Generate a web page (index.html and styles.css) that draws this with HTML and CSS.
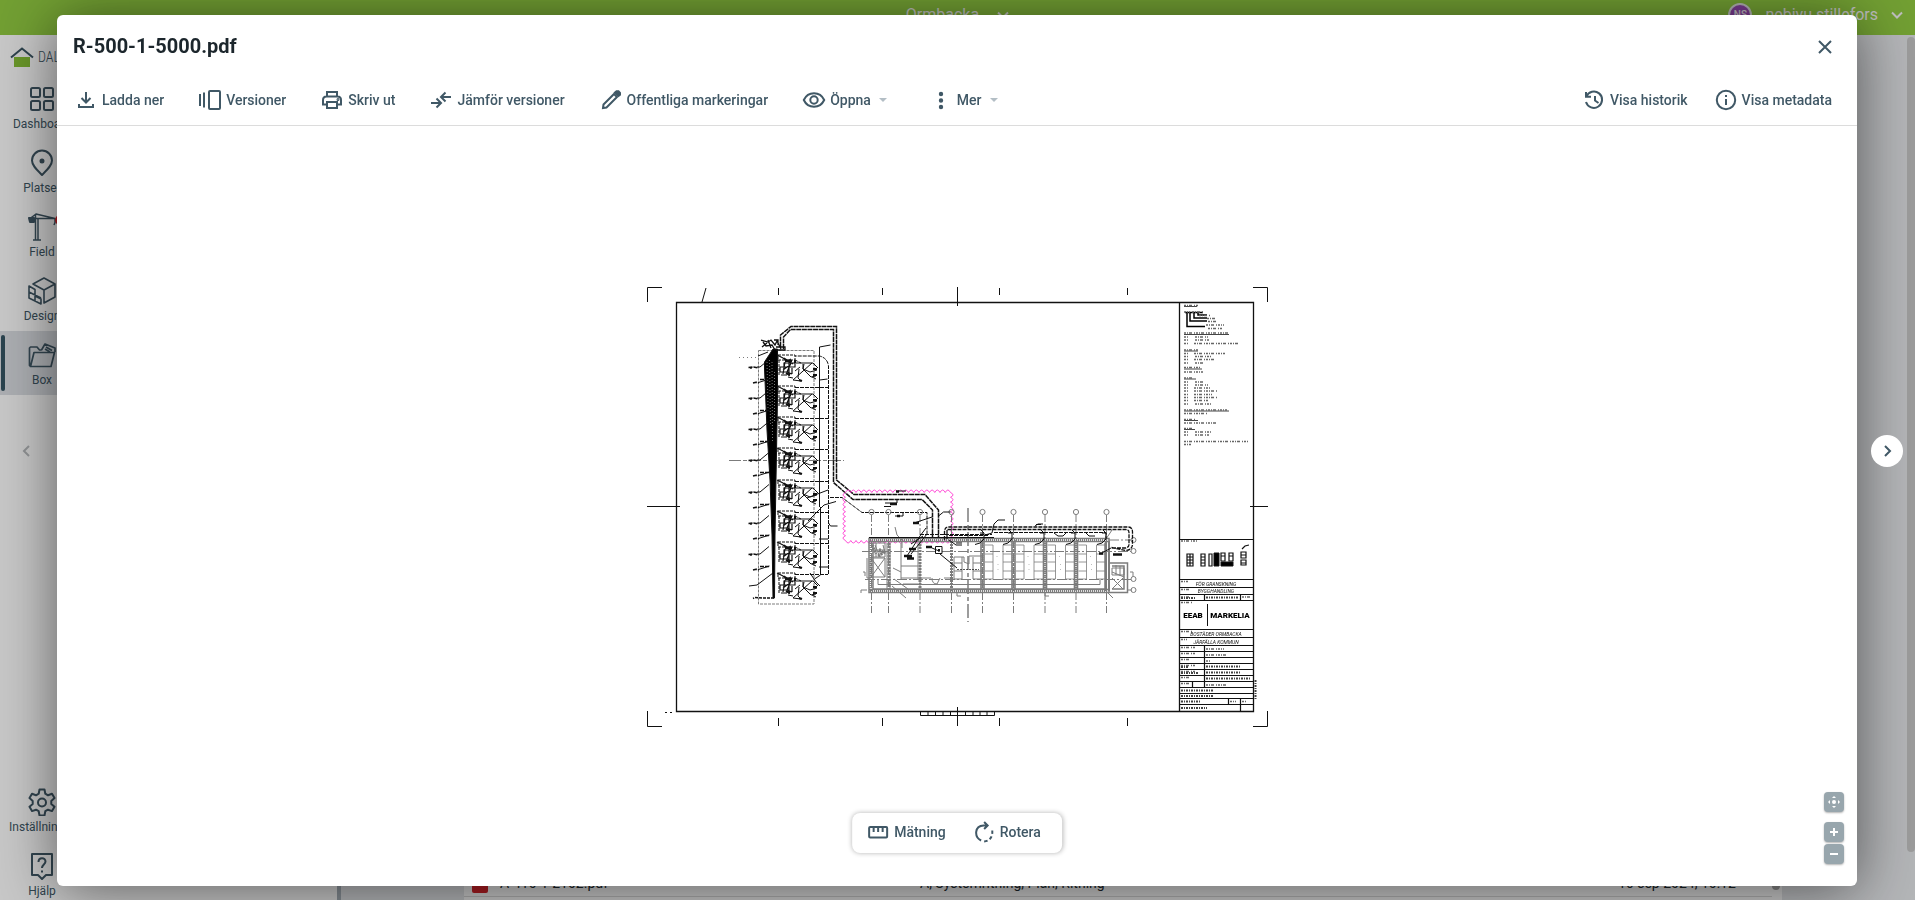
FILE: index.html
```html
<!DOCTYPE html>
<html lang="sv">
<head>
<meta charset="utf-8">
<title>R-500-1-5000.pdf</title>
<link rel="stylesheet" href="styles.css">
</head>
<body>
<div class="app">
  <header class="topbar">
    <button class="topbar-button project" type="button">Ormbacka
      <svg class="chevron" viewBox="0 0 12 12"><path d="M1 3.500l5 5 5-5"/></svg>
    </button>
    <button class="topbar-button account" type="button">
      <span class="avatar">NS</span>
      <span class="account-name">nebiyu stillefors</span>
      <svg class="chevron" viewBox="0 0 12 12"><path d="M1 3.500l5 5 5-5"/></svg>
    </button>
  </header>
  <div class="workspace">
    <nav class="sidebar">
      <a class="logo" href="#">
        <svg class="logo-house" viewBox="0 0 24 20"><path d="M4 10h16v10H4z" fill="#86c035"/><path d="M1 10.500L12 1.500l11 9" fill="none" stroke="#3a5563" stroke-width="2"/></svg>
        <span>DALUX</span>
      </a>
      <a class="nav-item" href="#">
        <svg viewBox="0 0 28 28"><rect x="3" y="3" width="9" height="9" rx="1.500"/><rect x="16" y="3" width="9" height="9" rx="1.500"/><rect x="3" y="16" width="9" height="9" rx="1.500"/><rect x="16" y="16" width="9" height="9" rx="1.500"/></svg>
        <span>Dashboard</span>
      </a>
      <a class="nav-item" href="#">
        <svg viewBox="0 0 28 28"><path d="M14 26C9 21 4 16.500 4 11.500a10 10 0 0 1 20 0C24 16.500 19 21 14 26z"/><circle cx="14" cy="12" r="1.500" fill="currentColor"/></svg>
        <span>Platser</span>
      </a>
      <a class="nav-item" href="#">
        <svg viewBox="0 0 28 28"><path d="M2 5.500L8 1l19 4.500M2 5.500h25v4l-1 2.500M7.500 1.500v25M10 5.500v21M5 27h8" stroke-width="1.500"/><path d="M1 5h5v4H2z" fill="currentColor"/></svg>
        <span class="badge"></span>
        <span>Field</span>
      </a>
      <a class="nav-item" href="#">
        <svg viewBox="0 0 28 28"><path d="M5 7l11-6 11 6-11 6zM27 7v13l-11 6V13M1 9l6 3.500V19l6 3v5L1 21zM1 15l12 6M7 18v6" stroke-width="1.600"/></svg>
        <span>Design</span>
      </a>
      <a class="nav-item selected" href="#">
        <svg viewBox="0 0 28 28"><path d="M2.500 25.500l-1-1V7l1-1H9l2.500 3h2M2.500 25.500L6 11.500h20.500L23 25.500zM13.500 9l3.500-6L27 7v4M17 8l5 3M18 6l6 3.500" stroke-width="1.700"/></svg>
        <span>Box</span>
      </a>
      <div class="nav-bottom">
        <a class="nav-item" href="#">
          <svg viewBox="0 0 28 28"><path d="M11.500 1.500h5l.8 4.200 2.700 1.600 4-1.500 2.500 4.300-3.200 2.800v3.200l3.200 2.700-2.500 4.300-4-1.400-2.700 1.500-.8 4.300h-5l-.8-4.300L8 21.700l-4 1.400-2.500-4.300 3.200-2.700v-3.200L1.500 10.100 4 5.800l4 1.500 2.700-1.600z"/><circle cx="14" cy="14.500" r="4"/></svg>
          <span>Inställningar</span>
        </a>
        <a class="nav-item" href="#">
          <svg viewBox="0 0 28 28"><path d="M4 2h20v21h-6l-4 4-4-4H4z"/><path d="M10.500 10c0-5 7-5 7-.5 0 3-3.500 3-3.500 6.500M14 18.500v2"/></svg>
          <span>Hjälp</span>
        </a>
      </div>
    </nav>
    <section class="folders"></section>
    <main class="content">
      <div class="file-card">
        <div class="file-row">
          <span class="pdf-icon">PDF</span>
          <span class="file-name">A-410-1-2102.pdf</span>
          <span class="file-tags">A, Systemritning, Plan, Ritning</span>
          <span class="file-date">16 sep 2024, 10:12</span>
        </div>
        <div class="card-scroll"></div>
      </div>
    </main>
    <div class="page-scroll"></div>
  </div>
</div>

<div class="overlay">
  <button class="pager pager-previous" type="button" aria-label="Föregående" disabled>
    <svg viewBox="0 0 12 12"><path d="M8 1L3 6l5 5"/></svg>
  </button>
  <div class="dialog" role="dialog" aria-labelledby="dialog-title">
    <div class="dialog-head">
      <h1 id="dialog-title">R-500-1-5000.pdf</h1>
      <button class="close" type="button" aria-label="Stäng"><svg viewBox="0 0 14 14"><path d="M1 1l12 12M13 1L1 13"/></svg></button>
    </div>
    <div class="toolbar">
      <div class="tools">
        <button class="tool" type="button"><svg viewBox="0 0 24 24"><path d="M12 4v10M7.500 10l4.500 4.500 4.500-4.500M5 16v3h14v-3"/></svg>Ladda ner</button>
        <button class="tool" type="button"><svg viewBox="0 0 24 24"><path d="M2 6v12M6 4.500v15"/><rect x="11" y="3" width="11" height="18" rx="1"/></svg>Versioner</button>
        <button class="tool" type="button"><svg viewBox="0 0 24 24"><path d="M7 8V4h10v4M7 16.500H3V12q0-3.500 3.500-3.500h11Q21 8.500 21 12v4.500h-4M7 14h10v6H7z"/><circle cx="18" cy="11.500" r=".5" class="solid"/></svg>Skriv ut</button>
        <button class="tool" type="button"><svg viewBox="0 0 24 24"><path d="M2 15h9M7.500 10.500L12 15l-4.500 4.500M22 9h-9M16.500 4.500L12 9l4.500 4.500"/></svg>Jämför versioner</button>
        <button class="tool" type="button"><svg viewBox="0 0 24 24"><path d="M4 20l.5-3.500L15 6l3 3L7.500 19.500z"/><path class="solid" d="M16 4.500l1.500-1.200h2l1.500 1.500v2L19.500 8z"/></svg>Offentliga markeringar</button>
        <button class="tool" type="button"><svg viewBox="0 0 24 24"><path d="M1.800 12C6 3 18 3 22.200 12 18 21 6 21 1.800 12z"/><circle cx="12" cy="12" r="3.700"/></svg>Öppna<span class="caret"></span></button>
        <button class="tool" type="button"><svg viewBox="0 0 24 24"><g class="solid"><circle cx="12" cy="6" r="1.200"/><circle cx="12" cy="12.500" r="1.200"/><circle cx="12" cy="19" r="1.200"/></g></svg>Mer<span class="caret"></span></button>
      </div>
      <div class="tools tools-end">
        <button class="tool" type="button"><svg viewBox="0 0 24 24"><path d="M4.300 8.500A8.200 8.200 0 1 1 4 14M4 4v4.800h5M13 8v4.500l3.500 2.500"/></svg>Visa historik</button>
        <button class="tool" type="button"><svg viewBox="0 0 24 24"><circle cx="12" cy="12" r="9.200"/><path d="M12 11v6M12 7v2"/></svg>Visa metadata</button>
      </div>
    </div>
    <div class="viewer">
      <svg class="drawing" width="622" height="444" viewBox="646 284 622 444" role="img" aria-label="Ritning R-500-1-5000">
        <defs>
          <g id="unit">
            <path d="M778 0H795V5H778zM779 5V21M795 5l6 3" stroke-dasharray="3 1"/>
            <path d="M777 0l6 3 4 3 4-2M784 3l9 6M784 8h11v4h-11zM780 12h9v5h-9zM789 5v16M785 7l-2 12M791 8l-4 9 5 2M783 15l8-6M781 20h6M792 13v6" stroke-width="1.200"/>
            <path d="M796 8h17l5 5M812 8l-19 17 8 1M799 14l-1 9 3 3M803 9v5l8 8 5-1M804 9l-1 5 7 3 7-2M812 22l4 2M795 16l5-4M788 22l5 1" />
            <path d="M795 5v3M786 18l4 2M799 25l3 1M813 14h4M813 20h4M785 6h7" stroke-width="2"/>
          </g>
          <g id="leader">
            <path d="M757 11h3l9-7.500M758.500 26.500l11-3.500"/>
            <path d="M748.500 11.500l5-.5 5 1M753 27l3-.8 3 .5M760 23.500h10M751 11v2" stroke-width="1.600" stroke-dasharray="4 1"/>
          </g>
          <g id="bay">
            <path d="M0 540v50M3 540v50" stroke-width="1.600"/>
            <path d="M1.500 541v49" stroke-width="2" stroke-dasharray="1 1"/>
            <path d="M4 545h8v34H4M4 554h8M4 562h8M4 571h8M31 545h-9v34h9M22 554h9M22 562h9M22 571h9" stroke-width=".8"/>
            <path d="M16 551v6M17 564v6" stroke-width=".5" stroke-dasharray="1 4"/>
          </g>
          <g id="axis"><circle cx="0" cy="512" r="2.600"/><path d="M0 515v100" stroke-dasharray="7 2 2 2"/></g>
          <path id="branch" d="M0 530l3 3v6l-4 4-5 1.500M-1 533h4" />
        </defs>
        <g class="ink">
          <path d="M647.500 302V287.500H662M1253 287.500h14.500V302M647.500 711v15.500H662M1253 726.500h14.500V711M706 288l-4 14M778.500 288v7M882.500 288v7M999.500 288v7M1127.500 288v7M778.500 718v8M882.500 718v8M999.500 718v8M1127.500 718v8M957.500 287v19M957.500 707v19M647 506.500h33M1250 506.500h18M665 712.500h2M670 712.500h2"/>
          <path d="M676.500 302.500h577v409h-577zM1179.500 302.500v409" stroke-width="1.300"/>
          <path d="M920.500 712v3.500h74V712M928 712v3M935.500 712v3M943 712v3M950.500 712v3M965.500 712v3M973 712v3M980 712v3M987 712v3"/>
        </g>
        <g class="grey">
          <path d="M758.500 350.500h55.500v253.500h-55.500z" stroke-dasharray="3 1"/>
          <path d="M729 460.500h115" stroke-dasharray="12 2 4 2"/>
          <path d="M739 357.500h17" stroke-dasharray="1 3"/>
        </g>
        <g class="ink">
          <path class="filled" d="M773 349h4.500v50l-1.500 80-1 56-.5 63h-1.500l-1-63-2-55-3-50-2.500-62v-6z"/>
          <path class="hatch" d="M767 362l1 46M769.500 360l1 66M772 362l.5 80M774.500 372v50"/>
          <path d="M761 340l7 2 3-2 4 5 2-4 4 8M763 342l3 4 6-1 3 5M768 340l3 8M776 347h9v3h-9M762 347l5-4M774 340h4v5" stroke-width="1.300"/>
          <path d="M758 356l10-4"/>
          <path d="M774 598h-12l-7-.5-2 1" stroke-dasharray="3 1" stroke-width="1.500"/>
          <use href="#unit" y="355"/><use href="#unit" y="386"/><use href="#unit" y="417"/><use href="#unit" y="448"/><use href="#unit" y="480"/><use href="#unit" y="511"/><use href="#unit" y="542"/><use href="#unit" y="573"/>
          <use href="#leader" y="356"/><use href="#leader" y="387"/><use href="#leader" y="418"/><use href="#leader" y="449"/><use href="#leader" y="481"/><use href="#leader" y="512"/><use href="#leader" y="543"/>
          <path d="M749 586l8-1 16-12" />
          <path d="M795 387.500h33M795 418.500h33M795 449.500h33M795 481.500h33M795 512.500h33M795 543.500h33M795 574.500h33M828.500 574V366q-1-8-9-10H795" stroke-dasharray="4 1"/>
          <path d="M819.500 347v160M819.500 347l11-2M820.500 507v68l-6 4M819.500 380l8-1M808 521l16-16 12-3.500M828.500 523l2 3h7M828 490l-21 8M819 539h9M819 567h10M810 573l6 9 4 4"/>
          <path d="M780.500 347v-12l10.500-8.500h45.500V480L854 494.500h71l13.500 15.500v27M783.500 349v-12l7-7.500h43V482.500L853 499.500h69l10.500 10.500v27" stroke-width="1.500" stroke-dasharray="5 .6"/>
          <path d="M830 497.500h12l20 15h65v22" stroke-dasharray="4 1"/>
        </g>
        <path class="cloud" d="M845.500 492.500q2.600-5 5.250 0 2.600-5 5.250 0 2.600-5 5.250 0 2.600-5 5.250 0 2.600-5 5.250 0 2.600-5 5.250 0 2.600-5 5.250 0 2.600-5 5.250 0 2.600-5 5.250 0 2.600-5 5.250 0 2.600-5 5.250 0 2.600-5 5.250 0 2.600-5 5.250 0 2.600-5 5.250 0 2.600-5 5.250 0 2.600-5 5.250 0 2.600-5 5.250 0 2.600-5 5.250 0 2.600-5 5.250 0 2.600-5 5.250 0q5 2.400 0 4.800 5 2.400 0 4.800 5 2.400 0 4.800 5 2.400 0 4.800 5 2.400 0 4.800 5 2.400 0 4.800 5 2.400 0 4.800 5 2.400 0 4.800 5 2.400 0 4.800 5 2.400 0 4.800q-2.600 5-5.250 0-2.600 5-5.250 0-2.600 5-5.250 0-2.600 5-5.250 0-2.600 5-5.250 0-2.600 5-5.250 0-2.600 5-5.250 0-2.600 5-5.250 0-2.600 5-5.250 0-2.600 5-5.250 0-2.600 5-5.250 0-2.600 5-5.250 0-2.600 5-5.250 0-2.600 5-5.250 0-2.600 5-5.250 0-2.600 5-5.250 0-2.600 5-5.250 0-2.600 5-5.250 0-2.600 5-5.250 0-2.600 5-5.250 0q-5-2.400 0-4.800-5-2.400 0-4.800-5-2.400 0-4.800-5-2.400 0-4.800-5-2.400 0-4.800-5-2.400 0-4.800-5-2.400 0-4.800-5-2.400 0-4.800-5-2.400 0-4.800-5-2.400 0-4.800"/>
        <g class="grey">
          <use href="#axis" x="871.500"/><use href="#axis" x="888.500"/><use href="#axis" x="920"/><use href="#axis" x="951.500"/><use href="#axis" x="982.500"/><use href="#axis" x="1013.500"/><use href="#axis" x="1045"/><use href="#axis" x="1076"/><use href="#axis" x="1106.500"/>
          <circle cx="1133.500" cy="540" r="2.500"/><circle cx="1133.500" cy="551" r="2.500"/><circle cx="1133.500" cy="579" r="2.500"/><circle cx="1133.500" cy="590" r="2.500"/>
          <path d="M968 508v114" stroke-dasharray="14 3 4 3" stroke-width="1.500"/>
          <path d="M862 551.500h269M865 579.500h266M1109 540h22M1128 590h4" stroke-dasharray="10 2 2 2"/>
          <path d="M869 538.500h240v54H869zM873 543v46h232v-46M869 589.500h240M869 541.500h240M1109 563h18.500v29.500H1109M1112 566h12v23h-12" stroke-width="1.500"/>
          <path d="M870 591.500h238M870 540h238M871 543v47" stroke-dasharray="1 1" stroke-width="3"/>
          <path d="M878 580v4.500h222v-5M901 543v36M901 566h17M918 543v36M901 578h30M944 578h7M893 568l8 4M894 579l14 10M903 584h15M892 586l14 12M932 578q0 6 5 6l3-6M954 557h10v5l5 2v-8h13M954 557v22h8v-22M973 557v22h9M954 563h8M954 571h8M973 563h9M973 571h9M895 527l2 8 5 5v8M1112 530l-6 9"/>
          <path d="M871 543h14v14h-14M876 543v14M871 550h14M871 558h14v19h-14zM871 558l14 19M885 558l-14 19M887 543v47M890 543v47M867 558v20h4M875 545l4 10M880 548v9M883 545l2 8"/>
          <path d="M872 545l4 9M879 550l6 3M878 556l7-4M889 543v47M920 541v49M951.500 541v49" stroke-width="3" stroke-dasharray="2 1"/>
          <path d="M1112 568h12v7h-12zM1116 565v10M1120 566v10M1112 572l12 5M1112 578l11 11M1123 578l-11 11M1108 593l5 5M865 576v-4h-2M861 593v-3h6M957 593v3h4M1045 593v3h4M1133 572v5M1130 572h3"/>
          <use href="#bay" x="981"/><use href="#bay" x="1012"/><use href="#bay" x="1043.500"/><use href="#bay" x="1074.500"/>
          <path d="M1106 541v50M1109 541v50" stroke-width="2"/>
        </g>
        <g class="ink">
          <path d="M869 537.500h125"/>
          <path d="M944.500 540v-8q0-5 4-5H1128q4.500 0 4.500 5v12q0 6-7 6.500l-14-3M947 539v-9.500h179q3 0 3 3v12q0 3-4 3.500h-13" stroke-width="1.300" stroke-dasharray="4 1"/>
          <path d="M920 534.500h72M994 532.500h112v6M988 535.500h-40" stroke-dasharray="4 1"/>
          <path d="M985 535l7-2 2-9 4-4h7M1035 526l3-2h5M938.500 516l5-4h7M914 523l18-6M898 491h8M885 503h12v-3M895 516h8v-3"/>
          <use href="#branch" x="981"/><use href="#branch" x="1009"/><use href="#branch" x="1041"/><use href="#branch" x="1072"/><use href="#branch" x="1103"/>
          <path d="M1054 533l4 3h5l3-3M1086 533l3 3h6M949 540l7 5h6"/>
          <path d="M926 528l-6 8-13 20M923 536l-12 8M927 534l-16 20"/>
          <path d="M890 504h7M913 523h6M909 549h7M904 556h8M907 558.500h7M926 547h6M1113 554.500h9M1099 553.500h4M896 491.500h3M897 516h3" stroke-width="2.500"/>
          <path d="M935.500 546.500h6.500v7h-6.500zM932 548l7 3M1102 553l9-5M1036 524.500h5"/>
          <path d="M938 550h2" stroke-width="2"/>
          <path d="M940 554l17 14" />
          <path d="M957 569.500h22" stroke-dasharray="2 1" stroke-width=".7"/>
          <path d="M884 506.500h7M956 543h6" />
        </g>
        <g class="legend">
          <path d="M1184 306.500h13M1184 334.500h45M1184 351h14M1184 369h18M1184 379h12M1184 411h45M1184 420.500h14M1184 429.500h11"/>
          <path class="tree" d="M1185 312.500h18M1187 313v13.500h18M1190 313v8h17M1194 313v5h13M1198 313v2h9"/>
          <path class="scribble" d="M1184 305.500h14M1184 312h6M1192 312h12M1199 315.500h11M1207 318.500h9M1208 321.500h9M1206 325h18M1208 328.500h14M1184 333h44M1184 337h4M1195 337h13M1184 340h5M1195 340h14M1184 343.500h4M1194 343.500h44M1184 350h14M1184 353.500h4M1194 353.500h31M1184 356.500h4M1195 356.500h16M1184 359.500h4M1194 359.500h22M1184 363h4M1195 363h8M1184 367.500h17M1184 372h19M1184 378h10M1184 382h4M1195 382h9M1184 385h4M1195 385h13M1184 388h4M1194 388h16M1184 391h5M1194 391h23M1184 394.500h5M1194 394.500h18M1184 397.500h4M1194 397.500h23M1184 400.500h4M1194 400.500h15M1184 404h4M1195 404h16M1184 410h43M1184 413.500h24M1184 419.500h12M1184 423h33M1184 428.500h10M1184 432h4M1195 432h17M1184 435h4M1195 435h14M1184 441.500h64M1184 444.500h7"/>
        </g>
        <g class="ink">
          <path d="M1180 539.500h73M1180 579.500h73M1180 587.500h73M1180 594.500h73M1180 600.500h73M1180 629.500h73M1180 637.500h73M1180 645.500h73M1180 651.500h73M1180 657.500h73M1180 663.500h73M1180 669.500h73M1180 675.500h73M1180 681.500h73M1180 687.500h73M1180 693.500h73M1180 698.500h73M1180 704.500h73M1204.500 594v6M1240.500 594v6M1204.500 645v42M1192.500 681v6M1228.500 698v6M1240.500 698v13" stroke-width="1.200"/>
          <path d="M1187 554h6v12h-6zM1187 557h6M1187 560h6M1187 563h6M1190 554v12M1201 554h4v12h-4zM1201 557h4M1201 560h4M1201 563h4M1209 554h3v12h-3zM1221 553h4v8h-4zM1229 553h4v8h-4zM1221 556h4M1229 556h4M1241 552h5v6h-5zM1241 560h5v5h-5zM1241 555h5M1241 563h5M1242 549l3-3 4-1" stroke-width="1.200"/>
          <path class="filled" d="M1214 553h5v13h-5zM1221 562h12v4h-12z"/>
          <path d="M1207.500 604v22"/>
        </g>
        <g class="legend">
          <path class="scribble" d="M1181 541h16M1181 581.500h7M1181 589.500h8M1181 602.500h12M1181 631.500h12M1181 639.500h6M1181 647.500h14M1206 649h18M1181 653.500h14M1206 655h22M1181 659.500h8M1206 661h5M1181 665.500h14M1181 671.500h14M1181 677.500h10M1181 683.500h8M1206 685h20M1230 701.500h6M1242 701.500h5M1181 597h8M1242 597h9"/>
          <path class="scribble heavy" d="M1181 598h15M1206 597.500h33M1181 667h8M1206 666.500h35M1181 673h18M1206 672.500h35M1206 678.500h44M1181 690.500h33M1181 696h32M1181 701.500h20M1181 708h26M1255.500 680v20"/>
        </g>
        <g class="sheet-text">
          <text x="1216" y="586">FÖR GRANSKNING</text>
          <text x="1216" y="593">BYGGHANDLING</text>
          <text x="1216" y="636">BOSTÄDER ORMBACKA</text>
          <text x="1216" y="644">JÄRFÄLLA KOMMUN</text>
          <text class="firm" x="1193" y="618">EEAB</text>
          <text class="firm" x="1230" y="618">MARKELIA</text>
        </g>
      </svg>
      <div class="measure-bar">
        <button class="tool" type="button"><svg viewBox="0 0 24 24"><rect x="3" y="7" width="18" height="10.500" rx="1"/><path d="M7.500 7v5M12 7v5M16.500 7v5" /></svg>Mätning</button>
        <button class="tool" type="button"><svg viewBox="0 0 24 24"><path d="M9 20.500C2 17 2 6 11.500 5.500H15M12 2l3.500 3.500L12 9"/><path d="M12 21.500c6-.5 9-5 8-12" stroke-dasharray="3.500 2.500"/></svg>Rotera</button>
      </div>
      <div class="zoom-bar">
        <button class="zoom-button" type="button" aria-label="Anpassa"><svg viewBox="0 0 20 20"><path d="M8 6l2-2 2 2zM8 14l2 2 2-2zM6 8l-2 2 2 2zM14 8l2 2-2 2z"/><circle cx="10" cy="10" r="2"/></svg></button>
        <div class="zoom-pair">
          <button class="zoom-button" type="button" aria-label="Zooma in"><svg viewBox="0 0 20 20"><path d="M9 6h2v3h3v2h-3v3H9v-3H6V9h3z"/></svg></button>
          <button class="zoom-button" type="button" aria-label="Zooma ut"><svg viewBox="0 0 20 20"><path d="M6 9h8v2H6z"/></svg></button>
        </div>
      </div>
    </div>
  </div>
  <button class="pager pager-next" type="button" aria-label="Nästa">
    <svg viewBox="0 0 12 12"><path d="M4 1l5 5-5 5"/></svg>
  </button>
</div>
</body>
</html>
```
FILE: styles.css
```css
* { box-sizing: border-box; }
body { margin: 0; font-family: Roboto, "Liberation Sans", sans-serif; color: #405866; overflow: hidden; }
button { font: inherit; color: inherit; background: none; border: 0; padding: 0; margin: 0; }
a { color: inherit; text-decoration: none; }

.app { height: 100vh; display: flex; flex-direction: column; }
.topbar { height: 35px; flex: none; display: grid; grid-template-columns: 1fr auto 1fr; padding: 0 12px 6px; background: #92cc41; color: #f4f4f4; font-size: 16px; }
.topbar-button { display: flex; align-items: center; gap: 13px; }
.project { grid-column: 2; gap: 18px; }
.account { grid-column: 3; justify-self: end; }
.avatar { width: 24px; height: 24px; border: 2px solid #e4e4e4; border-radius: 50%; background: #9c4cb8; font-size: 10px; line-height: 20px; text-align: center; font-weight: 500; }
.chevron { width: 12px; height: 12px; fill: none; stroke: currentColor; stroke-width: 2; }

.workspace { flex: 1; min-height: 0; display: flex; background: #e6e8eb; }
.sidebar { width: 90px; padding-right: 6px; display: flex; flex-direction: column; background: #fff; }
.logo { height: 40px; flex: none; display: flex; gap: 4px; align-items: center; padding: 4px 0 0 10px; font-family: "Roboto Condensed", Roboto, sans-serif; font-weight: 300; font-size: 14px; }
.logo-house { width: 24px; height: 20px; flex: none; }
.nav-item { position: relative; height: 64px; flex: none; display: flex; flex-direction: column; align-items: center; gap: 3px; padding-top: 10px; font-size: 12px; line-height: 16px; }
.nav-item svg { width: 28px; height: 28px; fill: none; stroke: currentColor; stroke-width: 2; stroke-linejoin: round; }
.selected { background: #dcdfe4; margin-right: -6px; padding-right: 6px; }
.selected::before { content: ""; position: absolute; left: 1px; top: 4px; bottom: 4px; width: 4px; border-radius: 2px; background: #365564; }
.badge { position: absolute; left: 55px; top: 12px; width: 10px; height: 10px; border-radius: 50%; background: #d8232a; }
.nav-bottom { margin-top: auto; height: 122px; overflow: hidden; }
.folders { width: 251px; background: #fff; border-right: 4px solid #a9b3bb; }
.content { flex: 1; display: flex; align-items: flex-end; padding: 0 125px 0 123px; }
.file-card { flex: 1; height: 100%; display: flex; align-items: flex-end; background: #fff; }
.file-row { flex: 1; height: 28px; margin-bottom: 3px; display: flex; align-items: center; border-bottom: 1px solid #ddd; padding: 0 4px 0 8px; color: #222b30; font-size: 14px; }
.pdf-icon { width: 16px; height: 20px; margin-right: 12px; border-radius: 2px; background: #d8232a; color: #fff; font-size: 8px; line-height: 20px; text-align: center; }
.file-name { width: 420px; }
.file-tags { flex: 1; }
.file-date { width: 150px; }
.card-scroll { width: 8px; height: 120px; margin: 0 2px 10px 0; border-radius: 4px; background: #a8a8a8; }
.page-scroll { width: 8px; margin: 2px 0 48px; border-radius: 4px; background: #c8c8c8; }

.overlay { position: fixed; inset: 0; display: flex; align-items: center; padding: 15px 0 14px; background: rgba(0, 0, 0, .22); }
.pager { position: relative; z-index: 1; width: 32px; height: 32px; border-radius: 50%; display: flex; align-items: center; justify-content: center; flex: none; }
.pager svg { width: 12px; height: 12px; fill: none; stroke: currentColor; stroke-width: 2; }
.pager-previous { margin: 0 14px 0 11px; color: #858789; }
.pager-next { margin: 0 12px 0 14px; background: #fff; }
.dialog { flex: 1; align-self: stretch; display: flex; flex-direction: column; border-radius: 6px; background: #fff; box-shadow: 0 4px 60px rgba(0, 0, 0, .55); }
.dialog-head { height: 60px; flex: none; display: flex; align-items: center; justify-content: space-between; padding: 4px 25px 0 16px; }
.dialog-head h1 { margin: 0; padding-bottom: 2px; font-size: 20px; line-height: 24px; font-weight: 700; color: #1c262c; }
.close { width: 14px; height: 14px; display: flex; }
.close svg { width: 14px; height: 14px; fill: none; stroke: currentColor; stroke-width: 2; }
.toolbar { height: 51px; flex: none; display: flex; align-items: center; justify-content: space-between; padding: 0 25px 0 17px; border-bottom: 1px solid #dcdcdc; }
.tools { display: flex; gap: 34px; }
.tools-end { gap: 26px; }
.tool { display: flex; align-items: center; gap: 4px; font-size: 14px; line-height: 24px; font-weight: 500; white-space: nowrap; }
.tool svg { width: 24px; height: 24px; fill: none; stroke: currentColor; stroke-width: 2; }
.tool .solid { fill: currentColor; }
.caret { width: 20px; display: flex; padding-left: 4px; }
.caret::before { content: ""; border: 4px solid transparent; border-top-color: #b3bec5; border-bottom: 0; }

.viewer { flex: 1; min-height: 0; position: relative; display: flex; align-items: center; justify-content: center; }
.drawing { display: block; max-width: 100%; }
.ink, .grey, .legend, .cloud { fill: none; stroke: #111; stroke-width: 1; }
.grey { stroke: #7c7c7c; }
.legend { stroke: #444; }
.tree { stroke: #000; stroke-width: 1.5; }
.cloud { stroke: #ff4fd8; }
.filled { fill: #000; }
.hatch { stroke: #777; stroke-width: 1; stroke-dasharray: 1 2; }
.scribble { stroke: #666; stroke-width: 1.5; stroke-dasharray: 2 1 1 1 3 2 1 1; }
.heavy { stroke: #444; stroke-width: 2; stroke-dasharray: 2 1 1 1; }
.sheet-text { font-size: 5px; font-style: italic; text-anchor: middle; fill: #111; }
.firm { font-size: 8px; font-style: normal; font-weight: 900; fill: #000; }
.measure-bar { position: absolute; left: 50%; bottom: 33px; transform: translateX(-50%); height: 40px; display: flex; gap: 26px; padding: 0 21px 2px 14px; border-radius: 8px; background: #fff; box-shadow: 0 0 5px rgba(0, 0, 0, .3); }
.zoom-bar { position: absolute; right: 13px; bottom: 22px; display: flex; flex-direction: column; gap: 10px; }
.zoom-pair { display: flex; flex-direction: column; gap: 2px; }
.zoom-button { width: 20px; height: 20px; display: flex; border-radius: 4px; background: #98a6ad; box-shadow: 0 1px 2px rgba(0, 0, 0, .3); }
.zoom-button svg { width: 20px; height: 20px; fill: #fff; }
```
